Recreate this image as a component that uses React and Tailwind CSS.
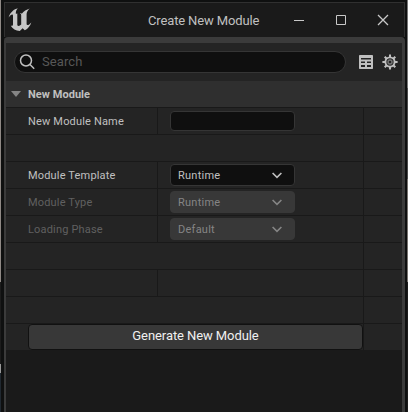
const rows = [
  { label: 'New Module Name', kind: 'input' },
  { span: true },
  { label: 'Module Template', kind: 'select', value: 'Runtime' },
  { label: 'Module Type', kind: 'select', value: 'Runtime', disabled: true },
  { label: 'Loading Phase', kind: 'select', value: 'Default', disabled: true },
  { span: true },
  { label: '' },
  { span: true },
];

function Logo() {
  return (
    <svg className="ml-[3px] mt-[5px] h-6 w-6 shrink-0" viewBox="0 0 24 24" fill="#c6c6c6">
      <path d="M9.8 0.3C6.2 1.1 2.2 4.2 0.6 9.4C2.1 7.3 3.6 6.2 4.4 6.5C5 6.8 5 7.5 5 8.4V16.3C5 17.7 4.2 18.1 2.8 17.7C4.4 20.8 7.8 22.6 11.8 23L14.6 20.3L16.8 22.3C20 20.6 22.2 17.8 23.3 14.4C21.8 16.1 20.6 17 19.5 17.1C18.9 17.1 18.6 16.7 18.6 16V6.1C18.6 4.2 19.8 2.3 21.7 0.5C18.5 1.5 15.7 3.4 13.8 5.7C13.2 5.2 12.5 5.1 11.9 5.1C12.9 5.8 13.2 6.5 13.2 7.5V16.6C12.3 17.5 11.3 18.1 10.5 18C9.6 17.9 9.3 17.2 9.3 16.2V5.5C8.8 5.3 8.4 5.5 7.9 5.9C7.6 3.8 8.4 1.9 9.8 0.3Z" />
    </svg>
  );
}

function TitleBar() {
  return (
    <div className="flex h-[35px] border-x border-t border-[#303030] bg-[#1a1a1a] text-[#c0c0c0]">
      <Logo />
      <div className="ml-[116px] mt-[8px] w-[140px] whitespace-nowrap text-[13px] leading-5 tracking-[-0.14px]">Create New Module</div>
      <svg className="ml-[3px] mt-[10px] h-[14px] w-[98px] shrink-0" viewBox="0 0 98 14" fill="none" stroke="#c8c8c8">
        <path d="M3 7.5H13" />
        <path d="M45.5 2.5H54.5V11.5H45.5Z" />
        <path d="M87 2L97 12M97 2L87 12" strokeWidth="1.3" />
      </svg>
    </div>
  );
}

function SearchBar() {
  return (
    <div className="flex h-[38px] pl-2 pt-2">
      <div className="flex h-[22px] w-[332px] shrink-0 items-center rounded-full border border-[#353535] bg-[#0f0f0f] pl-[4px]">
        <svg className="h-4 w-4" viewBox="0 0 16 16" fill="none" stroke="#c0c0c0" strokeWidth="1.5">
          <circle cx="7" cy="6.5" r="5.5" />
          <path d="M11 10.5L15.2 14.7" />
        </svg>
        <span className="ml-[7px] text-[13px] tracking-[0.1px] text-[#575757]">Search</span>
      </div>
      <svg className="ml-[13px] mt-1 h-[14px] w-[14px] shrink-0" viewBox="0 0 14 14">
        <rect width="14" height="14" rx="0.7" fill="#c0c0c0" />
        <path d="M2 3H12V4.5H2ZM2 6.5H6V8H2ZM8 6.5H12V8H8ZM2 10H6V12H2ZM8 10H12V12H8Z" fill="#242424" />
      </svg>
      <svg className="ml-[9px] mt-[3px] h-4 w-4 shrink-0" viewBox="0 0 16 16" fill="none" stroke="#c0c0c0">
        <circle cx="8" cy="8" r="4.6" strokeWidth="1.9" />
        <circle cx="8" cy="8" r="2" strokeWidth="1.4" stroke="#777" />
        <path d="M8 .4V3M8 13V15.6M.4 8H3M13 8H15.6M2.7 2.7L4.5 4.5M11.5 11.5L13.3 13.3M2.7 13.3L4.5 11.5M11.5 4.5L13.3 2.7" strokeWidth="2" />
      </svg>
    </div>
  );
}

function Select({ value, disabled }) {
  return (
    <div className={`flex h-[22px] w-[125px] items-center rounded border pl-[7px] text-[11px] ${disabled ? 'border-[#383838] bg-[#383838] text-[#858585]' : 'border-[#353535] bg-[#0f0f0f] text-[#c0c0c0]'}`}>
      <span className="w-[93px] pt-[2px] tracking-[0.25px]">{value}</span>
      <svg className="h-[7px] w-[12px]" viewBox="0 0 12 7" fill="none" stroke="currentColor" strokeWidth="1.6">
        <path d="M1.6 1L6 5.4L10.4 1" />
      </svg>
    </div>
  );
}

function Row({ row }) {
  const { span, label, kind, value, disabled } = row;
  return (
    <div className="flex h-[27px] border-t border-[#191919]">
      {span ? (
        <div className="w-[357px]" />
      ) : (
        <>
          <div className={`flex w-[151px] items-center pl-[22px] pt-[2px] text-[11px] tracking-[0.17px] ${disabled ? 'text-[#606060]' : 'text-[#c0c0c0]'}`}>{label}</div>
          <div className="flex w-[206px] items-center border-l border-[#191919] pl-3">
            {kind === 'input' && <div className="h-5 w-[125px] rounded border border-[#353535] bg-[#0f0f0f]" />}
            {kind === 'select' && <Select value={value} disabled={disabled} />}
          </div>
        </>
      )}
      <div className="flex-1 border-l border-[#191919]" />
    </div>
  );
}

export default function App() {
  return (
    <div className="flex h-[412px] w-[408px] overflow-hidden bg-[#0f1010] font-['Roboto',sans-serif]">
      <div className="flex w-px flex-col">
        <div className="h-[282px] bg-[#8f8985]" />
        <div className="h-[82px] bg-[#1c1c1c]" />
        <div className="h-[9px] bg-[#999999]" />
        <div className="flex-1 bg-[#202830]" />
      </div>
      <div className="ml-[3px] flex w-[401px] flex-col pt-[2px]">
        <TitleBar />
        <div className="flex flex-1 flex-col rounded-t border-b-0 border-l-2 border-r-[3px] border-t-[6px] border-[#3b3b3b] bg-[#1a1a1a]">
          <div className="bg-[#242424]">
            <SearchBar />
            <div className="flex h-[26px] items-center bg-[#2f2f2f] pl-[5px] text-[#c0c0c0]">
              <svg className="h-[6px] w-[10px]" viewBox="0 0 10 6" fill="#858585">
                <path d="M0 0H10L5 6Z" />
              </svg>
              <span className="ml-[7px] pt-[3px] text-[11px] font-bold tracking-[0.05px]">New Module</span>
            </div>
            {rows.map((row, i) => (
              <Row key={i} row={row} />
            ))}
            <div className="flex h-[27px] border-t border-[#191919]">
              <div className="w-[357px] pl-[22px]">
                <div className="flex h-[26px] items-center justify-center rounded border border-[#111111] bg-[#383838] pb-[2px] text-[13px] tracking-[-0.08px] text-[#f0f0f0]">Generate New Module</div>
              </div>
              <div className="flex-1 border-l border-[#191919]" />
            </div>
          </div>
        </div>
      </div>
      <div className="ml-[2px] flex w-px flex-col">
        <div className="h-[88px] bg-[#777777]" />
        <div className="h-[91px] bg-[#4c4c4c]" />
        <div className="h-[103px] bg-[#77736f]" />
        <div className="flex-1 bg-[#1c1c1c]" />
      </div>
    </div>
  );
}
